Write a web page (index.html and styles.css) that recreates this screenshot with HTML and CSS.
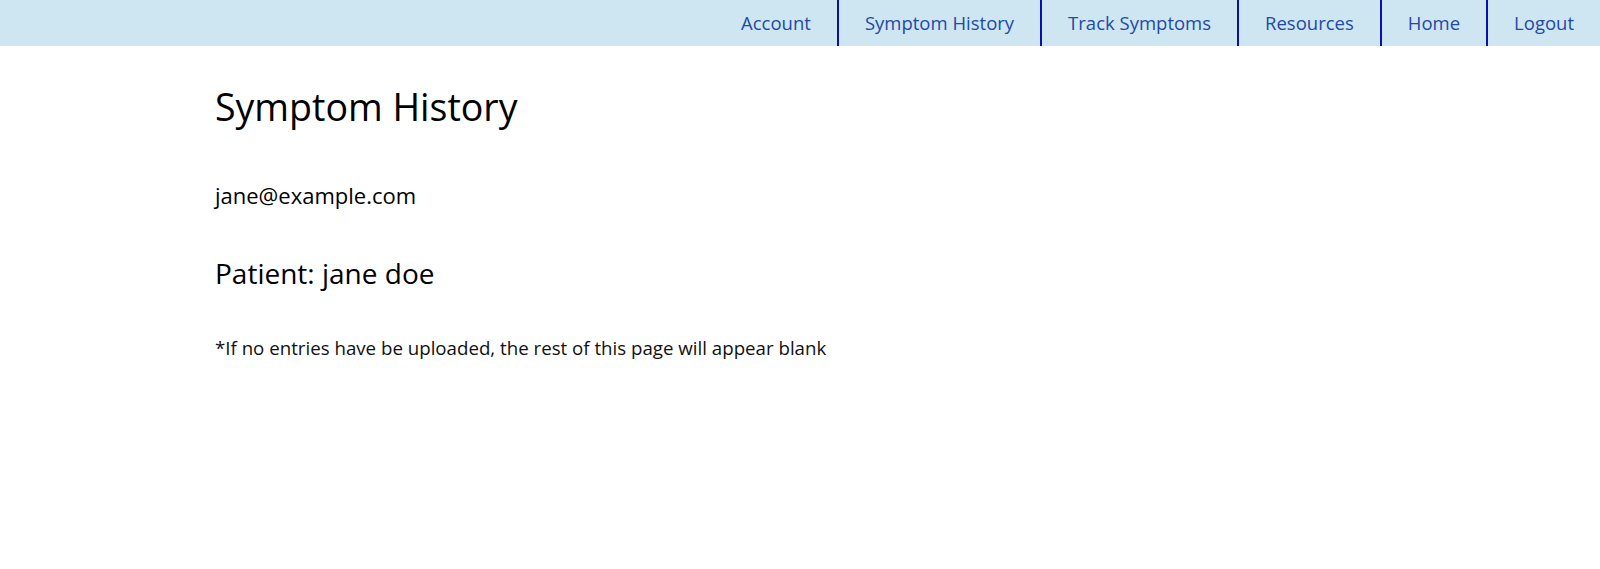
FILE: index.html
```html
<!DOCTYPE html>
<html lang="en">
<head>
<meta charset="utf-8">
<title>Symptom History</title>
<link rel="stylesheet" href="styles.css">
</head>
<body>
<nav class="topnav">
  <a class="nav-link" href="#">Account</a>
  <a class="nav-link" href="#">Symptom History</a>
  <a class="nav-link" href="#">Track Symptoms</a>
  <a class="nav-link" href="#">Resources</a>
  <a class="nav-link" href="#">Home</a>
  <a class="nav-link" href="#">Logout</a>
</nav>
<main class="content">
  <h1 class="page-title">Symptom History</h1>
  <p class="email">jane@example.com</p>
  <h2 class="patient">Patient: jane doe</h2>
  <p class="note">*If no entries have be uploaded, the rest of this page will appear blank</p>
</main>
</body>
</html>
```

FILE: styles.css
```css
* { box-sizing: border-box; }
html, body {
  margin: 0;
  padding: 0;
  background: #ffffff;
  font-family: "Open Sans", "Noto Sans", sans-serif;
  color: #000;
}
.topnav {
  display: flex;
  justify-content: flex-end;
  background: #cde6f2;
  height: 46px;
}
.nav-link {
  display: block;
  padding: 0 26px;
  line-height: 46px;
  font-size: 18.5px;
  color: #2449a6;
  text-decoration: none;
  border-left: 2px solid #0a10b0;
}
.nav-link:first-child { border-left: none; }
.content {
  width: 1170px;
  margin: 0 auto;
}
.page-title {
  font-size: 37.5px;
  font-weight: 400;
  margin: 0;
  padding-top: 37px;
  line-height: 48px;
}
.email {
  font-size: 22px;
  margin: 49px 0 0;
  line-height: 30px;
}
.patient {
  font-size: 28px;
  font-weight: 400;
  margin: 44px 0 0;
  line-height: 38px;
}
.note {
  font-size: 18.7px;
  margin: 43px 0 0;
  line-height: 26px;
  color: #111;
}
```
